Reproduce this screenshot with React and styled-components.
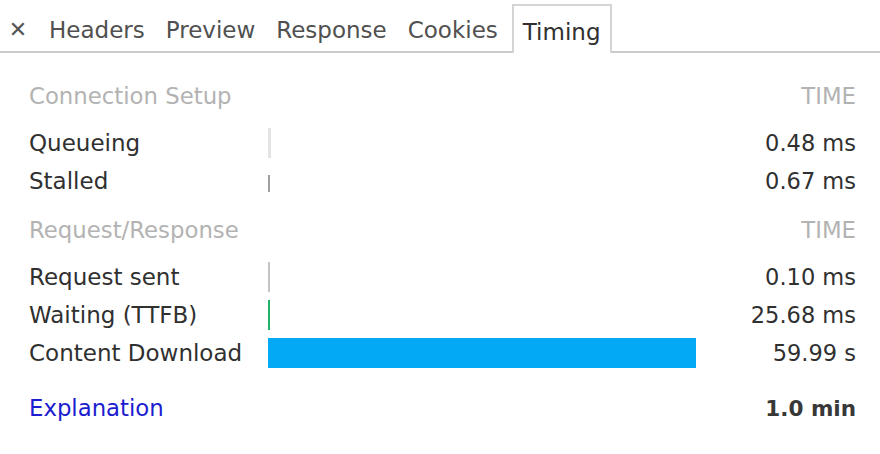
import React from "react";
import styled, { createGlobalStyle } from "styled-components";

const Global = createGlobalStyle`
  html, body { margin: 0; padding: 0; background: #fff; }
  body { font-family: "DejaVu Sans", "Liberation Sans", sans-serif; }
`;

const Page = styled.div`
  width: 880px;
  height: 454px;
  background: #fff;
  overflow: hidden;
`;

const TabBar = styled.div`
  display: flex;
  align-items: flex-end;
  height: 51px;
  border-bottom: 2px solid #cbcbcb;
  padding-left: 8px;
`;

const Close = styled.div`
  width: 20px;
  height: 47px;
  padding-top: 3px;
  box-sizing: border-box;
  display: flex;
  align-items: center;
  justify-content: center;
  color: #555;
  font-size: 22px;
  margin-right: 11px;
`;

const Tab = styled.div`
  box-sizing: border-box;
  display: flex;
  align-items: center;
  padding: 4px ${(p) => (p.$active ? "9px" : "10px")} 0;
  margin-right: 1px;
  font-size: 23px;
  color: ${(p) => (p.$active ? "#303030" : "#505050")};
  background: #fff;
  border: ${(p) => (p.$active ? "2px solid #d4d4d4" : "none")};
  border-bottom: none;
  margin-bottom: ${(p) => (p.$active ? "-2px" : "0")};
  height: ${(p) => (p.$active ? "49px" : "47px")};
  margin-left: ${(p) => (p.$active ? "3px" : "0")};
`;

const Body = styled.div`
  display: grid;
  grid-template-columns: 239px 428px 1fr;
  padding: 24px 24px 0 29px;
`;

const SectionCell = styled.div`
  height: 38px;
  display: flex;
  align-items: center;
  font-size: 22.8px;
  color: #b3b3b3;
  margin-top: ${(p) => p.$top}px;
  margin-bottom: 9px;
  justify-content: ${(p) => (p.$right ? "flex-end" : "flex-start")};
`;

const Label = styled.div`
  height: 38px;
  display: flex;
  align-items: center;
  font-size: 23px;
  color: #303030;
  white-space: nowrap;
`;

const BarCell = styled.div`
  height: 38px;
  display: flex;
  align-items: center;
`;

const Bar = styled.div`
  height: ${(p) => p.$h || 30}px;
  background: ${(p) => p.$color};
  align-self: ${(p) => (p.$bottom ? "flex-end" : "center")};
  margin-bottom: ${(p) => (p.$bottom ? "8px" : "0")};
`;

const Time = styled.div`
  height: 38px;
  display: flex;
  align-items: center;
  justify-content: flex-end;
  font-size: 22.5px;
  color: #303030;
  white-space: nowrap;
`;

const FooterCell = styled.div`
  height: 38px;
  display: flex;
  align-items: center;
  margin-top: 17px;
  font-size: 22.8px;
  justify-content: ${(p) => (p.$right ? "flex-end" : "flex-start")};
  grid-column: ${(p) => (p.$span ? "span 2" : "auto")};
`;

const Link = styled.a`
  color: #1c1cd0;
  text-decoration: none;
`;

const Total = styled.span`
  font-weight: bold;
  font-size: 21.5px;
  color: #383838;
`;

const tabs = ["Headers", "Preview", "Response", "Cookies", "Timing"];

const sections = [
  {
    title: "Connection Setup",
    top: 0,
    rows: [
      { label: "Queueing", color: "#e3e3e3", w: 3, time: "0.48 ms" },
      { label: "Stalled", color: "#a0a0a0", w: 2, h: 17, bottom: true, time: "0.67 ms" },
    ],
  },
  {
    title: "Request/Response",
    top: 11,
    rows: [
      { label: "Request sent", color: "#c4c4c4", w: 2, time: "0.10 ms" },
      { label: "Waiting (TTFB)", color: "#1fb36a", w: 2, time: "25.68 ms" },
      { label: "Content Download", color: "#03a9f4", w: 428, time: "59.99 s" },
    ],
  },
];

export default function App() {
  return (
    <Page>
      <Global />
      <TabBar>
        <Close>✕</Close>
        {tabs.map((t) => (
          <Tab key={t} $active={t === "Timing"}>
            {t}
          </Tab>
        ))}
      </TabBar>
      <Body>
        {sections.map((s) => (
          <React.Fragment key={s.title}>
            <SectionCell $top={s.top}>{s.title}</SectionCell>
            <SectionCell $top={s.top} />
            <SectionCell $top={s.top} $right>
              TIME
            </SectionCell>
            {s.rows.map((r) => (
              <React.Fragment key={r.label}>
                <Label>{r.label}</Label>
                <BarCell>
                  <Bar
                    $color={r.color}
                    $h={r.h}
                    $bottom={r.bottom}
                    style={{ width: r.w + "px" }}
                  />
                </BarCell>
                <Time>{r.time}</Time>
              </React.Fragment>
            ))}
          </React.Fragment>
        ))}
        <FooterCell $span>
          <Link href="#">Explanation</Link>
        </FooterCell>
        <FooterCell $right>
          <Total>1.0 min</Total>
        </FooterCell>
      </Body>
    </Page>
  );
}
